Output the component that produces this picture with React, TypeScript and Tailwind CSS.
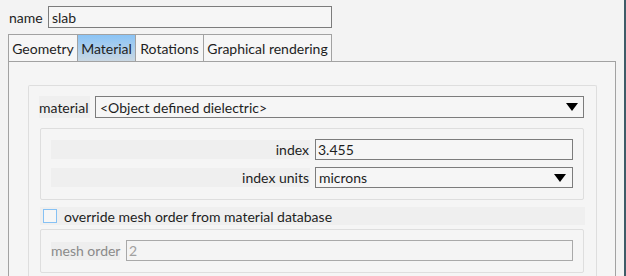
import React from 'react';

const font = { fontFamily: 'Lato, "Noto Sans", sans-serif' };

const Arrow: React.FC = () => (
  <svg width="12" height="8" viewBox="0 0 12 8" className="shrink-0">
    <polygon points="0,0 12,0 6,8" fill="#000" />
  </svg>
);

const App: React.FC = () => {
  return (
    <div className="w-[626px] h-[276px] bg-[#f3f3f3] flex text-[14px] leading-none text-[#1e1e1e] whitespace-nowrap overflow-hidden" style={font}>
      <div className="flex-1 pl-2 pt-[6px] flex flex-col min-h-0">
        <div className="flex items-center h-[22px] shrink-0">
          <span className="w-[40px] pl-[1px] pt-[1px]">name</span>
          <div className="w-[284px] h-[22px] border border-[#7c7c7c] bg-[#f6f6f6] flex items-center px-[3px] pt-[1px]">slab</div>
        </div>

        <div className="flex mt-[6px] h-[27px] shrink-0">
          <div className="w-[70px] border border-[#a2a2a2] border-b-0 bg-[#f6f6f6] flex items-center justify-center pt-[2px]">Geometry</div>
          <div className="w-[57px] border-t border-[#a2a2a2] bg-gradient-to-b from-[#8bc4f6] to-[#c9d7e2] flex items-center justify-center pt-[2px]">Material</div>
          <div className="w-[69px] border border-[#a2a2a2] border-b-0 bg-[#f6f6f6] flex items-center justify-center pt-[2px]">Rotations</div>
          <div className="w-[128px] border border-l-0 border-[#a2a2a2] border-b-0 bg-[#f6f6f6] flex items-center justify-center pt-[2px]">Graphical rendering</div>
        </div>

        <div className="w-[608px] flex-1 min-h-0 overflow-hidden border border-b-0 border-[#a2a2a2] bg-[#f5f5f5] pt-[23px] pl-[19px]">
          <div className="w-[569px] h-[200px] border border-b-0 border-[#dedede] rounded-t-[2px] pt-[10px] pl-[10px] pr-[12px]">
            <div className="flex h-[22px] items-center">
              <div className="w-[51px] h-[22px] bg-[#efefef] flex items-center pt-[1px]">material</div>
              <div className="ml-[5px] flex-1 h-[22px] border border-[#7c7c7c] bg-[#f6f6f6] flex items-center justify-between pl-[4px] pr-[5px]">
                <span className="pt-[1px]">&lt;Object defined dielectric&gt;</span>
                <Arrow />
              </div>
            </div>

            <div className="mt-[10px] ml-[1px] w-[544px] h-[72px] border border-[#dedede] rounded-[2px] pt-[10px] pl-[10px]">
              <div className="flex items-center h-[21px]">
                <div className="w-[259px] h-[19px] bg-[#efefef] flex items-center justify-end pr-[1px] pt-[1px]">index</div>
                <div className="ml-[5px] w-[258px] h-[21px] border border-[#7c7c7c] bg-[#f6f6f6] flex items-center px-[2px] pt-[1px]">3.455</div>
              </div>
              <div className="flex items-center h-[21px] mt-[7px]">
                <div className="w-[259px] h-[19px] bg-[#efefef] flex items-center justify-end pr-[1px] pt-[1px]">index units</div>
                <div className="ml-[5px] w-[258px] h-[21px] border border-[#7c7c7c] bg-[#f6f6f6] flex items-center justify-between pl-[3px] pr-[6px]">
                  <span className="pt-[1px]">microns</span>
                  <Arrow />
                </div>
              </div>
            </div>

            <div className="mt-[7px] ml-[1px] w-[545px] h-[18px] bg-[#efefef] flex items-center">
              <div className="ml-[3px] w-[14px] h-[14px] border border-[#86c1f4] bg-[#f6f6f6]" />
              <span className="ml-[7px] pt-[1px]">override mesh order from material database</span>
            </div>

            <div className="mt-[4px] ml-[1px] w-[544px] h-[44px] border border-[#dedede] rounded-[2px] pt-[10px] pl-[10px]">
              <div className="flex items-center h-[21px]">
                <div className="w-[69px] h-[18px] bg-[#eeeeee] flex items-center text-[#8a8a8a] pt-[1px]">mesh order</div>
                <div className="ml-[6px] w-[447px] h-[21px] border border-[#a9a9a9] bg-[#f4f4f4] flex items-center px-[2px] text-[#a0a0a0] pt-[1px]">2</div>
              </div>
            </div>
          </div>
        </div>
      </div>
      <div className="w-[2px] h-full bg-[#3e5c68]" />
    </div>
  );
};

export default App;
